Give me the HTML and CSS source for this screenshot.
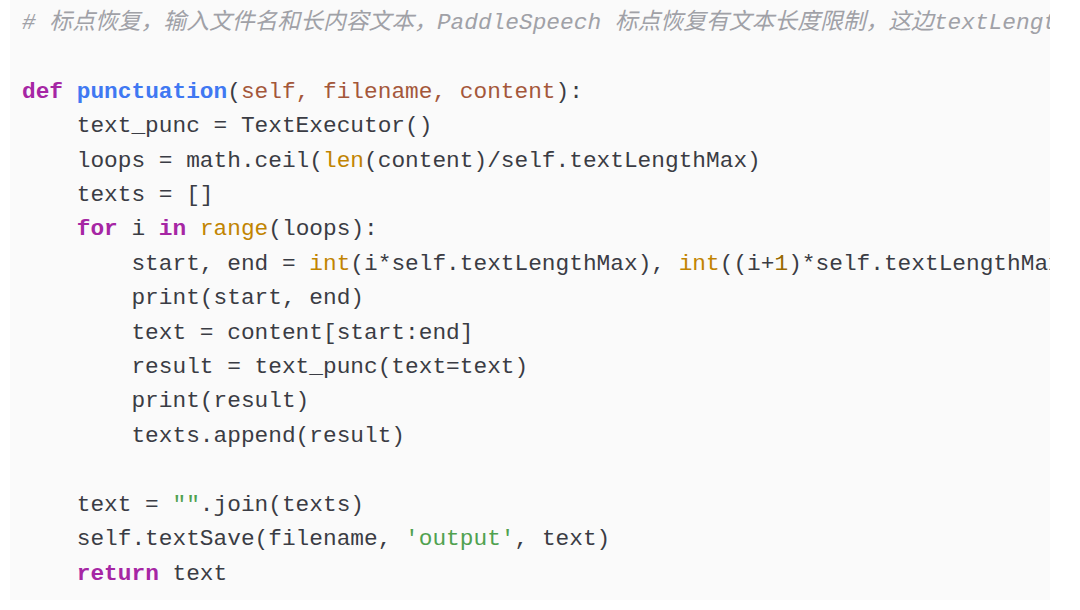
FILE: index.html
```html
<!DOCTYPE html>
<html lang="zh">
<head>
<meta charset="utf-8">
<link rel="stylesheet" href="styles.css">
</head>
<body>
<div class="code-block">
<pre class="code"><span class="c"># 标点恢复，输入文件名和长内容文本，PaddleSpeech 标点恢复有文本长度限制，这边textLengthMax控制分段长度</span>

<span class="k">def</span> <span class="f">punctuation</span>(<span class="p">self, filename, content</span>):
    text_punc = TextExecutor()
    loops = math.ceil(<span class="b">len</span>(content)/self.textLengthMax)
    texts = []
    <span class="k">for</span> i <span class="k">in</span> <span class="b">range</span>(loops):
        start, end = <span class="b">int</span>(i*self.textLengthMax), <span class="b">int</span>((i+<span class="n">1</span>)*self.textLengthMax)
        print(start, end)
        text = content[start:end]
        result = text_punc(text=text)
        print(result)
        texts.append(result)

    text = <span class="s">""</span>.join(texts)
    self.textSave(filename, <span class="s">'output'</span>, text)
    <span class="k">return</span> text
</pre>
</div>
</body>
</html>
```

FILE: styles.css
```css
html, body {
  margin: 0;
  padding: 0;
  background: #ffffff;
}

.code-block {
  margin-left: 10px;
  width: 1040px;
  height: 600px;
  background: #fafafa;
  overflow: hidden;
}

.code {
  margin: 0;
  padding: 6px 0 0 12px;
  font-family: "Liberation Mono", "Noto Sans CJK SC", monospace;
  font-size: 22.8px;
  line-height: 34.4px;
  color: #3a3c44;
  white-space: pre;
}

.c {
  color: #a0a1a7;
  font-style: italic;
}

.k {
  color: #a626a4;
  font-weight: bold;
}

.f {
  color: #4078f2;
  font-weight: bold;
}

.p {
  color: #a4573a;
}

.b {
  color: #c18401;
}

.n {
  color: #986801;
}

.s {
  color: #50a14f;
}
```
